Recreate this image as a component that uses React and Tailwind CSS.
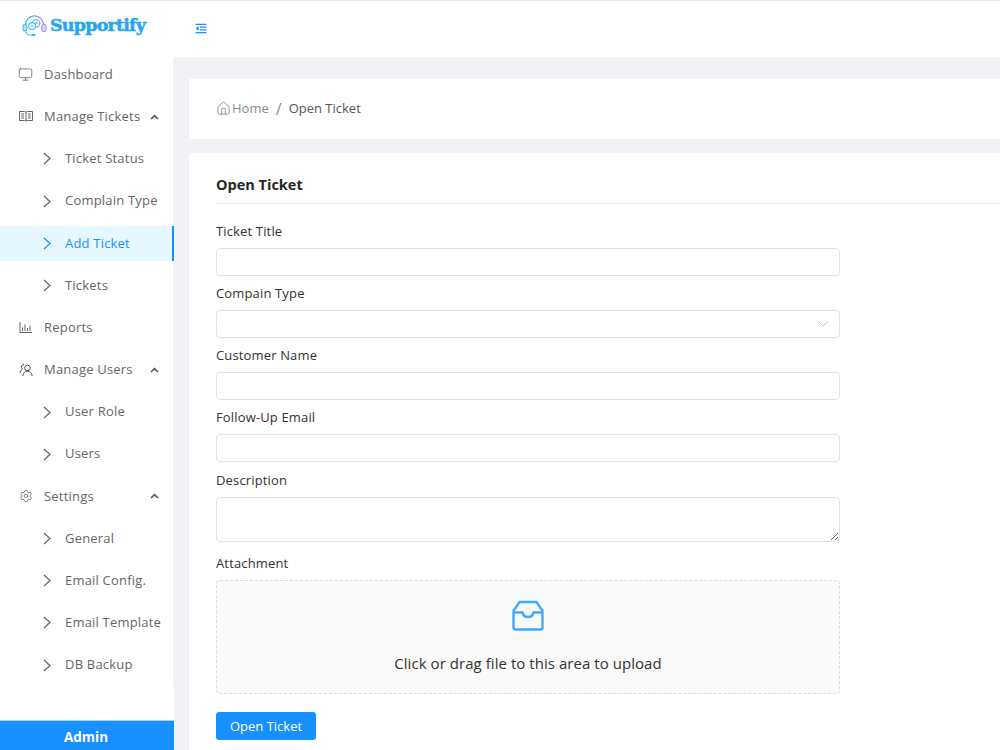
import React from "react";
import { Settings, Monitor, Home } from "lucide-react";

const Book = () => (
  <svg width="14" height="13" viewBox="0 0 14 13" fill="none" stroke="#555" strokeWidth=".9">
    <path d="M.5 1.500h5c.7 0 1.500.3 1.500 1 0-.7.8-1 1.500-1h5v9h-5c-.8 0-1.500.3-1.500.8 0-.5-.7-.8-1.500-.8h-5z" />
    <path d="M7 2.500v8.500M2.200 4h2.800M2.200 6h2.800M2.200 8h2.800M9 4h2.800M9 6h2.800M9 8h2.800" />
  </svg>
);
const Bars = () => (
  <svg width="14" height="13" viewBox="0 0 14 13" fill="none" stroke="#555" strokeWidth=".9">
    <path d="M1 1v10.500h12M3.500 6.500v3.500M6 3.500v6.500M8.500 7v3M11 4.500V10" />
  </svg>
);
const Users = () => (
  <svg width="14" height="14" viewBox="0 0 14 14" fill="none" stroke="#555" strokeWidth="1">
    <circle cx="8.500" cy="5" r="2.800" />
    <path d="M3.800 13c.3-2.800 2.200-4.800 4.700-4.800s4.400 2 4.700 4.800M5 1.300A2.600 2.600 0 0 0 3.500 6C2 7 1.200 8.300 1 10" />
  </svg>
);
const Indent = () => (
  <svg width="12" height="11" viewBox="0 0 12 11" fill="none" stroke="#1890ff" strokeWidth="1.300">
    <path d="M.5 1.300h11M5 4.100h6.500M5 6.900h6.500M.5 9.700h11" />
    <path d="M3.200 3.500 1 5.500l2.200 2z" fill="#1890ff" strokeWidth=".6" />
  </svg>
);
const Logo = () => (
  <svg width="25" height="24" viewBox="0 0 26 24" fill="none" strokeWidth="1.100">
    <defs>
      <linearGradient id="g" x1="0" x2="1" y1="0" y2="0">
        <stop offset="0" stopColor="#22b8f5" />
        <stop offset="1" stopColor="#a78bfa" />
      </linearGradient>
    </defs>
    <path d="M3.500 12C3.500 5.500 7.500 1.500 13 1.500s9.500 4 9.500 10.500" stroke="url(#g)" strokeWidth="1.300" />
    <rect x="1" y="10.500" width="4" height="7" rx="2" stroke="#38bdf8" fill="#bae6fd" />
    <rect x="20.500" y="10.500" width="4.500" height="7.500" rx="2" stroke="#a78bfa" fill="#ddd6fe" />
    <circle cx="14.500" cy="9.500" r="4" stroke="#60a5fa" fill="#fff" />
    <circle cx="10.500" cy="12" r="3.500" stroke="#38bdf8" fill="#fff" />
    <path d="M9 12h3M13.500 9h3" stroke="#60a5fa" />
    <path d="M4 18c.5 2.500 3 3.500 6 3.500" stroke="#22b8f5" />
    <rect x="10" y="20.300" width="4" height="2.200" rx="1" fill="#22b8f5" />
  </svg>
);
const Inbox = () => (
  <svg width="32" height="32" viewBox="0 0 32 32" fill="none" stroke="#40a9ff" strokeWidth="2.400" strokeLinejoin="round">
    <path d="M7.500 2h17L30.500 11v16.500a2 2 0 0 1-2 2h-25a2 2 0 0 1-2-2V11z" />
    <path d="M1.500 12.500h9c.5 3 2.500 4.500 5.500 4.500s5-1.500 5.500-4.500h9" />
  </svg>
);
const Right = () => (
  <svg width="8" height="13" viewBox="0 0 8 13" fill="none" stroke="currentColor" strokeWidth="1.200" className="mr-[14px] ml-[2px]">
    <path d="M1 1l6 5.500L1 12" />
  </svg>
);
const Up = () => (
  <svg width="9" height="6" viewBox="0 0 9 6" fill="none" stroke="#555" strokeWidth="1.700" className="absolute left-[150px]">
    <path d="M1 5l3.500-3.300L8 5" />
  </svg>
);

const Top = ({ icon, label, open }) => (
  <div className="relative h-[35px] mb-[7.2px] flex items-center pl-[19px] text-[#666]">
    <span className="w-[25px] flex items-center">{icon}</span>
    <span className="text-[13px] tracking-[0.2px] whitespace-nowrap">{label}</span>
    {open && <Up />}
  </div>
);
const Sub = ({ label, active }) => (
  <div
    className={
      "h-[35px] mb-[7.2px] flex items-center pl-[41px] " +
      (active ? "bg-[#e6f7ff] text-[#1890ff] border-r-[2px] border-[#1890ff] -mr-[1px]" : "text-[#666]")
    }
  >
    <Right />
    <span className="text-[13px] tracking-[0.2px] whitespace-nowrap">{label}</span>
  </div>
);
const Field = ({ label, children, mb = "mb-[8px]" }) => (
  <div className={mb}>
    <div className="h-[20px] mb-[6px] flex items-center text-[13px] tracking-[0.15px] text-[#333]">{label}</div>
    {children}
  </div>
);
const Input = () => <div className="h-[28px] w-[624px] bg-white border border-[#e3e3e3] rounded-[4px]" />;

export default function App() {
  return (
    <div className="h-screen w-full overflow-hidden flex flex-col bg-[#f0f2f5] font-['Open_Sans','Liberation_Sans',sans-serif]">
      <header className="h-[57px] shrink-0 bg-white border-t border-[#e8e8e8] flex items-center">
        <div className="w-[174px] pl-[22px] flex items-center gap-[3px] -mt-[7px]">
          <Logo />
          <span className="text-[17.500px] font-bold text-[#22a7f5] font-['DejaVu_Serif',serif] tracking-[-0.8px] [-webkit-text-stroke:0.5px_#22a7f5]">Supportify</span>
        </div>
        <div className="ml-[21px] -mt-[2px]">
          <Indent />
        </div>
      </header>
      <div className="flex flex-1 min-h-0">
        <aside className="relative w-[174px] shrink-0 flex flex-col justify-between">
          <nav className="bg-white h-[630px] w-[173px]">
            <Top icon={<Monitor size={15} strokeWidth={1.100} className="text-[#555] -ml-[1px]" />} label="Dashboard" />
            <Top icon={<Book />} label="Manage Tickets" open />
            <Sub label="Ticket Status" />
            <Sub label="Complain Type" />
            <Sub label="Add Ticket" active />
            <Sub label="Tickets" />
            <Top icon={<Bars />} label="Reports" />
            <Top icon={<Users />} label="Manage Users" open />
            <Sub label="User Role" />
            <Sub label="Users" />
            <Top icon={<Settings size={14} strokeWidth={1.200} className="text-[#555]" />} label="Settings" open />
            <Sub label="General" />
            <Sub label="Email Config." />
            <Sub label="Email Template" />
            <Sub label="DB Backup" />
          </nav>
          <div className="flex-1 bg-white" />
          <div className="h-[30px] bg-[#1890ff] border-t border-[#a6d4ff] flex items-center justify-center pt-[4px] pr-[2px] text-white text-[13.500px] font-bold">Admin</div>
        </aside>
        <main className="flex-1 min-w-0 pl-[15px] pt-[22px] overflow-hidden">
          <div className="h-[60px] bg-white flex items-center pl-[27px] text-[13px]">
            <Home size={15} strokeWidth={1.200} className="text-[#777] mr-[1px] -mt-[1px]" />
            <span className="text-[#8c8c8c]">Home</span>
            <span className="text-[#8c8c8c] text-[16px] mx-[7px] leading-none">/</span>
            <span className="text-[#555]">Open Ticket</span>
          </div>
          <div className="mt-[14px] bg-white pl-[27px] pb-[20px]">
            <div className="h-[51px] pt-[14px] flex items-center border-b border-[#e8e8e8] text-[14.500px] font-bold text-[#262626] mb-[18px]">Open Ticket</div>
            <Field label="Ticket Title"><Input /></Field>
            <Field label="Compain Type">
              <div className="relative"><Input />
                <svg width="10" height="6" viewBox="0 0 10 6" fill="none" stroke="#bfbfbf" strokeWidth="1" className="absolute left-[602px] top-[11px]"><path d="M.5.5 5 5 9.500.5" /></svg>
              </div>
            </Field>
            <Field label="Customer Name"><Input /></Field>
            <Field label="Follow-Up Email" mb="mb-[9px]"><Input /></Field>
            <Field label="Description" mb="mb-[12px]">
              <textarea className="block h-[45px] w-[624px] bg-white border border-[#e3e3e3] rounded-[4px]" />
            </Field>
            <Field label="Attachment" mb="mb-[18px]">
              <div className="h-[114px] w-[624px] bg-[#fafafa] border border-dashed border-[#dcdcdc] rounded-[4px] flex flex-col items-center pt-[19px]">
                <Inbox />
                <div className="mt-[20px] text-[15px] tracking-[0.05px] text-[#333]">Click or drag file to this area to upload</div>
              </div>
            </Field>
            <button className="h-[28px] w-[100px] bg-[#1890ff] rounded-[3px] text-white text-[13px] pt-[2px]">Open Ticket</button>
          </div>
        </main>
      </div>
    </div>
  );
}
